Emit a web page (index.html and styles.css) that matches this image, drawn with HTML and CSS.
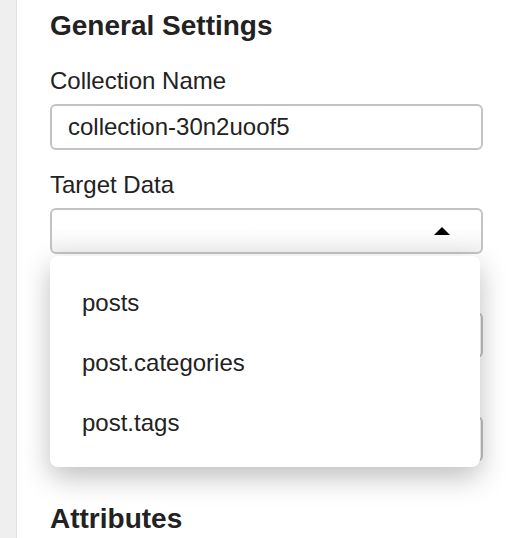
FILE: index.html
```html
<!DOCTYPE html>
<html lang="en">
<head>
<meta charset="utf-8">
<title>General Settings</title>
<link rel="stylesheet" href="styles.css">
</head>
<body>
<div class="layout">
  <aside class="rail"></aside>
  <main class="panel">
    <h2 class="section-title">General Settings</h2>

    <div class="field">
      <label class="field-label">Collection Name</label>
      <div class="text-input">collection-30n2uoof5</div>
    </div>

    <div class="field">
      <label class="field-label">Target Data</label>
      <div class="select-wrap">
        <div class="select-box"><span class="caret"></span></div>
        <ul class="menu">
          <li class="menu-item">posts</li>
          <li class="menu-item">post.categories</li>
          <li class="menu-item">post.tags</li>
        </ul>
      </div>
    </div>

    <div class="field">
      <span class="field-label"></span>
      <div class="text-input"></div>
    </div>

    <div class="field">
      <span class="field-label"></span>
      <div class="text-input"></div>
    </div>

    <h2 class="section-title attributes">Attributes</h2>
  </main>
</div>
</body>
</html>
```

FILE: styles.css
```css
html, body {
  margin: 0;
  padding: 0;
  background: #ffffff;
}

body {
  font-family: "Liberation Sans", Arial, Helvetica, sans-serif;
  color: #222222;
  overflow: hidden;
}

.layout {
  display: flex;
  min-height: 538px;
}

.rail {
  width: 16px;
  flex: 0 0 16px;
  background: #efefef;
  border-right: 1px solid #e1e1e1;
}

.panel {
  flex: 1;
  padding: 10px 23px 0 33px;
  display: flex;
  flex-direction: column;
}

.section-title {
  margin: 0;
  font-size: 28px;
  line-height: 32px;
  font-weight: 700;
  color: #222222;
}

.section-title.attributes {
  margin-top: 41px;
}

.field {
  display: flex;
  flex-direction: column;
  gap: 9px;
  margin-top: 21px;
}

.section-title + .field {
  margin-top: 25px;
}

.field-label {
  display: block;
  font-size: 24px;
  line-height: 28px;
  height: 28px;
  color: #222222;
}

.text-input {
  box-sizing: border-box;
  height: 46px;
  border: 2px solid #c3c3c3;
  border-radius: 6px;
  background: #ffffff;
  padding: 0 16px;
  font-size: 24px;
  line-height: 42px;
  color: #222222;
}

.select-wrap {
  position: relative;
}

.select-box {
  box-sizing: border-box;
  height: 46px;
  border: 2px solid #c3c3c3;
  border-radius: 6px;
  background: linear-gradient(#ffffff 0%, #ffffff 40%, #f2f2f2 100%);
  display: flex;
  align-items: center;
  justify-content: flex-end;
  padding-right: 31px;
}

.caret {
  width: 0;
  height: 0;
  border-left: 8px solid transparent;
  border-right: 8px solid transparent;
  border-bottom: 8px solid #000000;
}

.menu {
  position: absolute;
  top: calc(100% + 2px);
  left: 0;
  right: 3px;
  margin: 0;
  padding: 17px 0 14px 0;
  list-style: none;
  background: #ffffff;
  border-radius: 8px;
  box-shadow: 0 10px 28px rgba(0, 0, 0, 0.26);
  z-index: 5;
}

.menu-item {
  height: 60px;
  line-height: 60px;
  padding-left: 32px;
  font-size: 24px;
  color: #222222;
}
```
